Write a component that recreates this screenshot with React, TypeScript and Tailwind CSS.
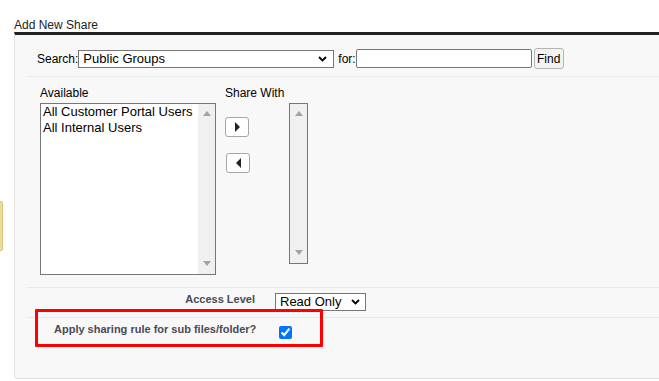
import { useState } from "react";

const font = "font-['Liberation_Sans',Arial,sans-serif]";

function Chevron() {
  return (
    <svg width="9" height="6" viewBox="0 0 9 6" className="shrink-0">
      <path d="M1 1 L4.5 4.5 L8 1" fill="none" stroke="#000" strokeWidth="1.8" />
    </svg>
  );
}

function ScrollTrack() {
  return (
    <div className="flex w-[17px] shrink-0 flex-col items-center justify-between bg-[#f0f0f0] pb-[8px] pt-[7px]">
      <svg width="8" height="5" viewBox="0 0 8 5">
        <path d="M0 5 L4 0 L8 5 Z" fill="#a3a3a3" />
      </svg>
      <svg width="8" height="5" viewBox="0 0 8 5">
        <path d="M0 0 L4 5 L8 0 Z" fill="#a3a3a3" />
      </svg>
    </div>
  );
}

function MoveButton({ dir }: { dir: "right" | "left" }) {
  return (
    <button className="flex h-[20px] w-[24px] items-center justify-center rounded-[3px] border border-[#a6a6a6] bg-white">
      <svg width="5" height="10" viewBox="0 0 5 10">
        {dir === "right" ? (
          <path d="M0 0 L5 5 L0 10 Z" fill="#222" />
        ) : (
          <path d="M5 0 L0 5 L5 10 Z" fill="#222" />
        )}
      </svg>
    </button>
  );
}

export default function App() {
  const [type, setType] = useState("Public Groups");
  const [access, setAccess] = useState("Read Only");
  const [query, setQuery] = useState("");
  const available = ["All Customer Portal Users", "All Internal Users"];

  return (
    <div className={`relative h-[381px] w-[659px] overflow-hidden bg-white text-black ${font}`}>
      {/* tab peeking in at the left edge */}
      <div className="absolute left-0 top-[201px] h-[50px] w-[3px] rounded-r-[2px] border border-l-0 border-[#d6c478] bg-[#ecdc9c]" />

      <div className="pl-[14px] pt-[18px]">
        <h2 className="text-[12px] leading-[14px] text-[#222]">Add New Share</h2>

        <div className="h-[347px] w-[660px] rounded-bl-[4px] border-b border-l border-t-[3px] border-[#e3e3e3] border-t-[#222] bg-[#f8f8f8]">
          <div className="ml-[12px]">
            {/* search row */}
            <div className="border-b border-[#e8e8e8] pb-[7px] pl-[10px] pt-[13px]">
              <div className="flex h-[21px] items-center text-[12px]">
                <span>Search:</span>
                <div className="flex h-[18px] w-[256px] items-center border border-[#767676] bg-white pr-[6px]">
                  <select
                    value={type}
                    onChange={(e) => setType(e.target.value)}
                    className="h-full flex-1 appearance-none pl-[4px] text-[13px] leading-[16px] outline-none"
                  >
                    <option>Public Groups</option>
                    <option>Roles</option>
                    <option>Users</option>
                  </select>
                  <Chevron />
                </div>
                <span className="ml-[4px]">for:</span>
                <input
                  value={query}
                  onChange={(e) => setQuery(e.target.value)}
                  className="h-[19px] w-[176px] rounded-[2px] border border-[#767676] bg-white px-[2px] text-[13px] outline-none"
                />
                <button className="ml-[2px] h-[21px] w-[30px] rounded-[3px] border border-[#b5b5b5] bg-[#f3f3f3] text-[12px] leading-[14px]">
                  Find
                </button>
              </div>
            </div>

            {/* dual list */}
            <div className="flex border-b border-[#e8e8e8] pb-[12px] pl-[13px] pt-[9px] text-[12px] leading-[14px]">
              <div className="w-[176px]">
                <div>Available</div>
                <div className="mt-[3px] flex h-[172px] border border-[#767676] bg-white">
                  <ul className="flex-1 pl-[2px] text-[13px] leading-[16px]">
                    {available.map((a) => (
                      <li key={a} className="whitespace-nowrap">
                        {a}
                      </li>
                    ))}
                  </ul>
                  <ScrollTrack />
                </div>
              </div>
              <div className="ml-[9px]">
                <div>Share With</div>
                <div className="mt-[3px] flex">
                  <div className="flex w-[64px] flex-col pt-[14px]">
                    <MoveButton dir="right" />
                    <div className="ml-[1px] mt-[16px]">
                      <MoveButton dir="left" />
                    </div>
                  </div>
                  <div className="flex h-[161px] border border-[#767676] bg-white">
                    <ScrollTrack />
                  </div>
                </div>
              </div>
            </div>

            {/* access level */}
            <div className="flex items-start border-b border-[#e8e8e8] pb-[6px] pt-[5px]">
              <div className="w-[228px] text-right text-[11px] font-bold leading-[13px] text-[#4a4a56]">Access Level</div>
              <div className="ml-[20px] flex h-[18px] w-[91px] items-center border border-[#767676] bg-white pr-[5px]">
                <select
                  value={access}
                  onChange={(e) => setAccess(e.target.value)}
                  className="h-full flex-1 appearance-none pl-[4px] text-[13px] leading-[16px] outline-none"
                >
                  <option>Read Only</option>
                  <option>Read/Write</option>
                </select>
                <Chevron />
              </div>
            </div>

            {/* apply to sub folders */}
            <div className="flex items-start pl-[27px] pt-[5px]">
              <label htmlFor="apply-sub" className="w-[225px] text-[11px] font-bold leading-[13px] text-[#4a4a56]">
                Apply sharing rule for sub files/folder?
              </label>
              <input id="apply-sub" type="checkbox" defaultChecked className="m-0 mt-[3px] h-[13px] w-[13px]" />
            </div>
          </div>
        </div>
      </div>

      {/* red annotation box */}
      <div className="absolute left-[35px] top-[309px] h-[38px] w-[288px] rounded-[1px] border-[3px] border-[#ff0000]" />
    </div>
  );
}
